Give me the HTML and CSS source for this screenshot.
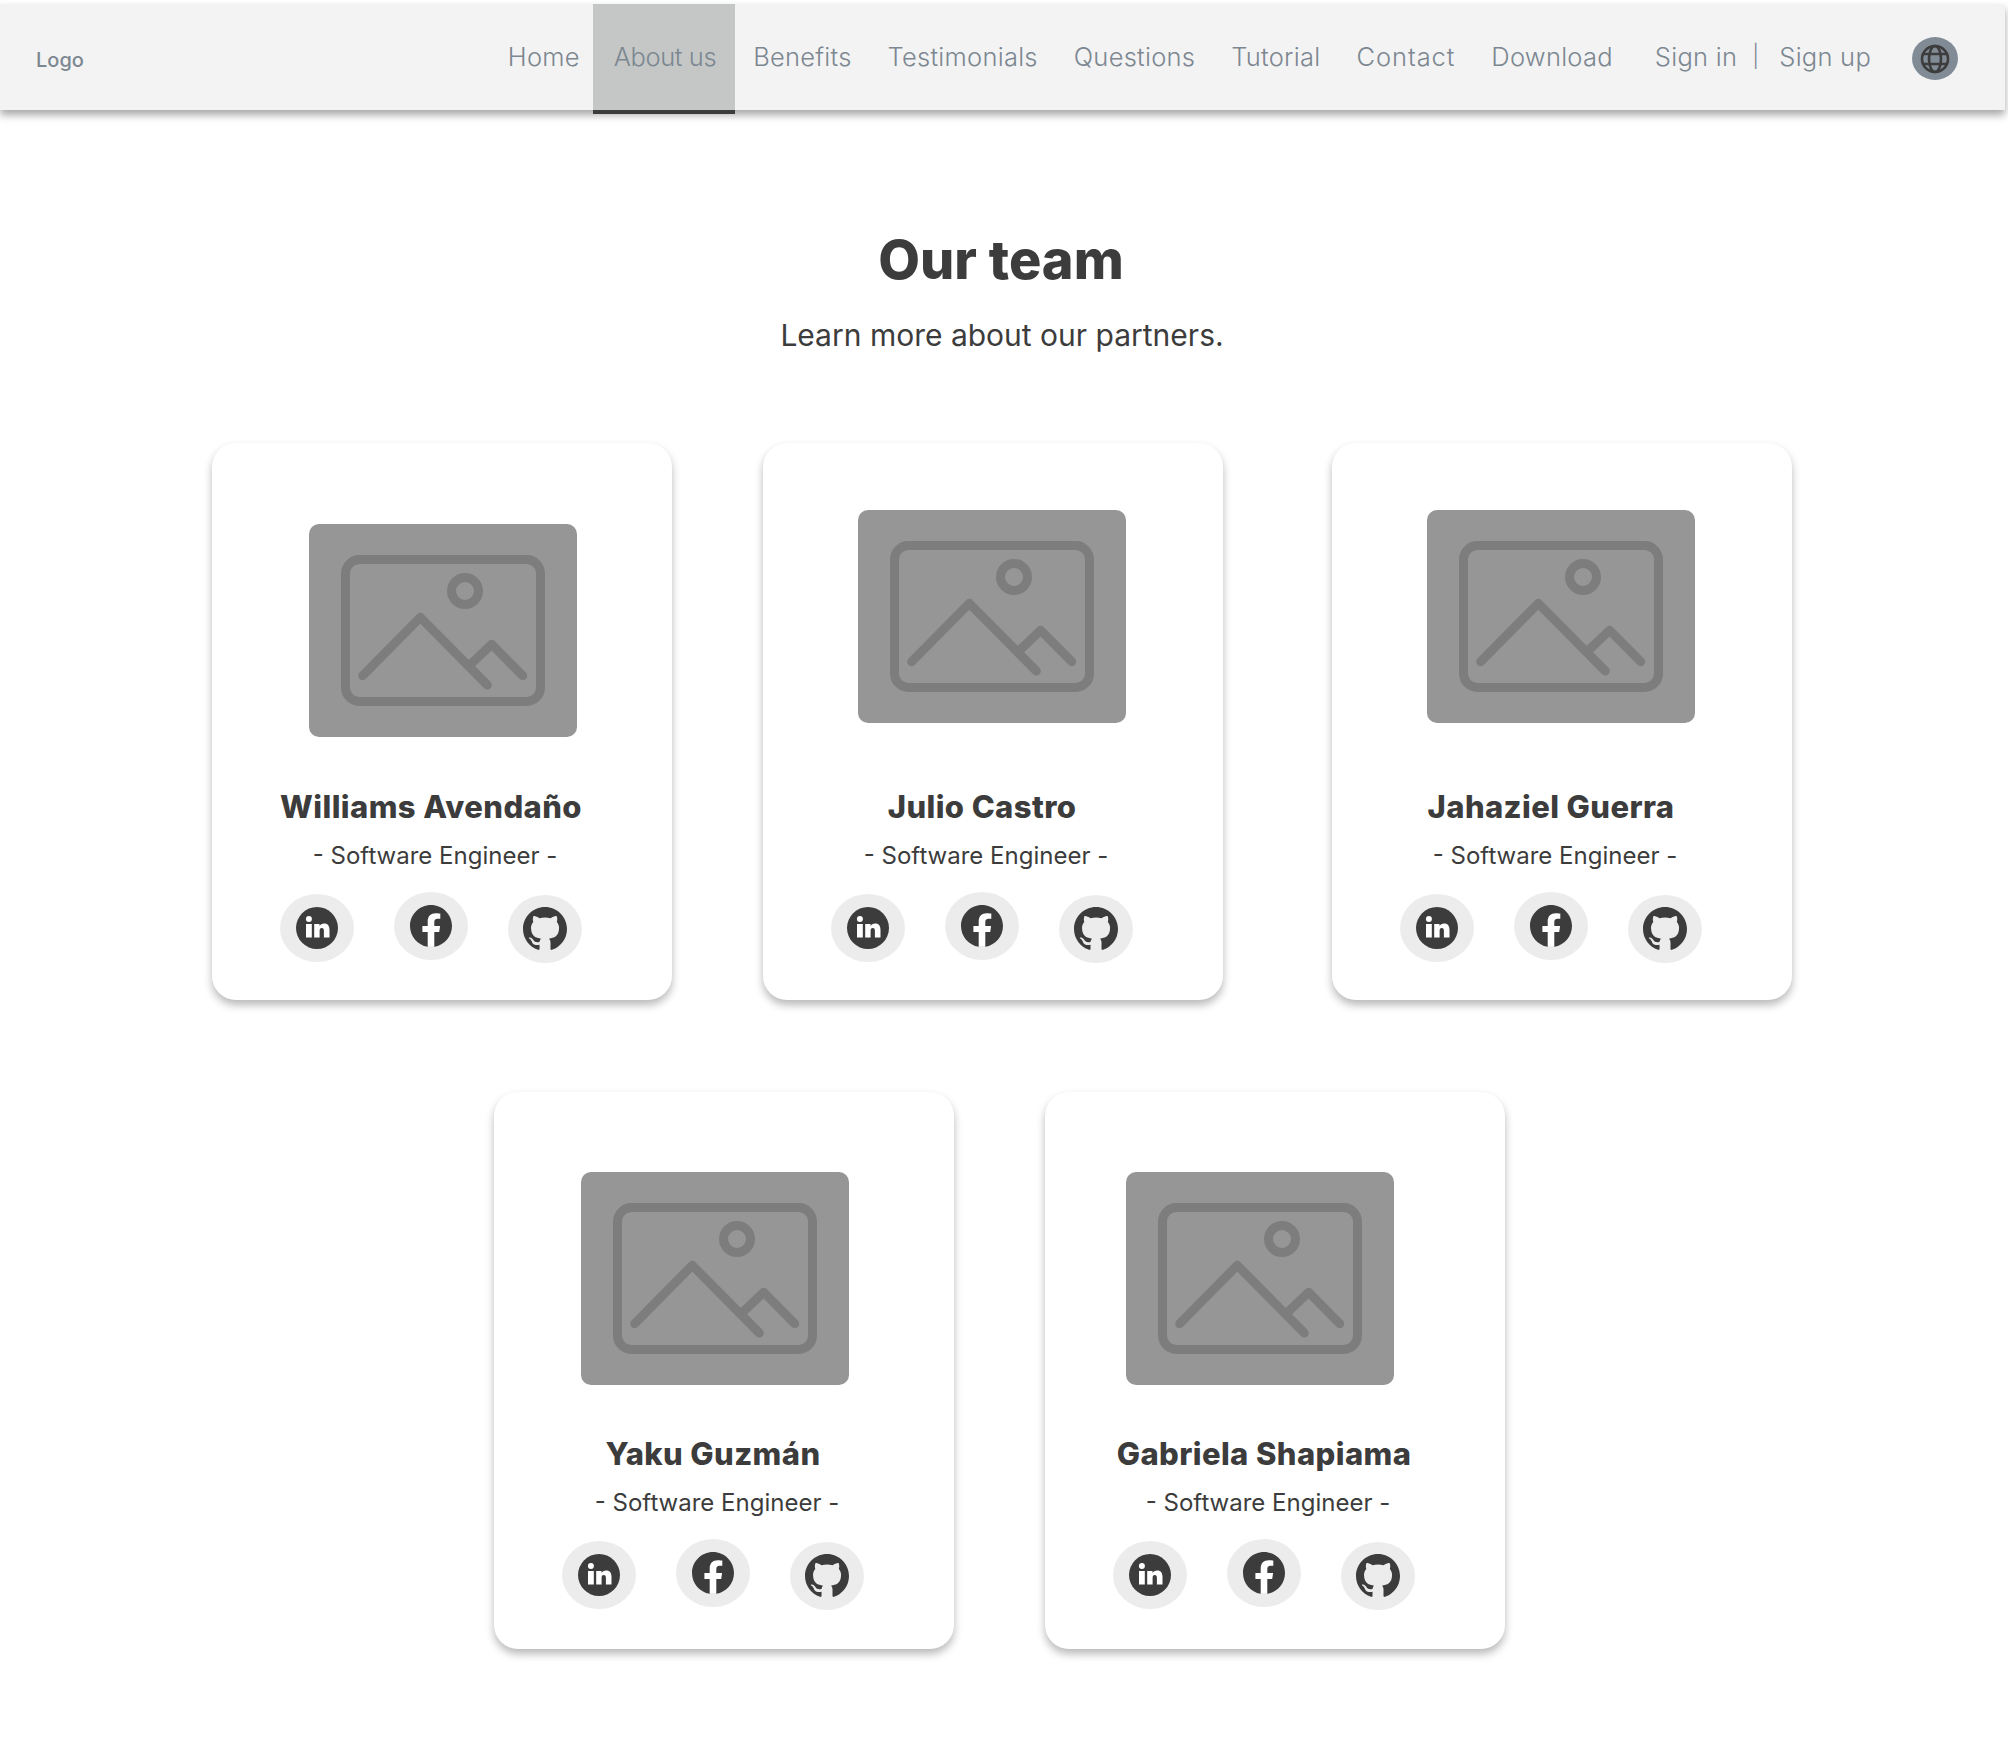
FILE: index.html
```html
<!DOCTYPE html>
<html lang="en">
<head>
    <meta charset="UTF-8" />
    <title>Our team</title>
    <link rel="stylesheet" href="styles.css">
</head>
<body>

<svg class="defs" width="0" height="0">
    <symbol id="placeholder" viewBox="0 0 268 213">
        <rect x="36.5" y="35.5" width="195" height="142" rx="14" fill="none" stroke="#7d7d7d" stroke-width="9"/>
        <circle cx="156" cy="67" r="13.5" fill="none" stroke="#7d7d7d" stroke-width="9"/>
        <path d="M53.7 151.7 111.3 93.3 178.3 161M162.7 139.3 182.7 120.3 213.7 151.7" fill="none" stroke="#7d7d7d" stroke-width="9" stroke-linecap="round" stroke-linejoin="round"/>
    </symbol>
    <symbol id="linkedin" viewBox="0 0 42 42">
        <circle cx="21" cy="21" r="21" fill="#3c3c3c"/>
        <path fill="#fff" d="M10 17h5.800v13.500H10zM12.900 9a3 3 0 1 1 0 6 3 3 0 0 1 0-6zM18.200 17h5.300v2c.8-1.400 2.500-2.400 4.600-2.400 4 0 5.400 2.600 5.400 6.300v7.600h-5.600v-6.600c0-1.700-.5-3-2.100-3-1.700 0-2.200 1.300-2.200 3v6.600h-5.400z"/>
    </symbol>
    <symbol id="facebook" viewBox="0 0 42 42">
        <circle cx="21" cy="21" r="20" fill="#fff"/>
        <path fill="#3c3c3c" d="M42 21C42 9.400 32.600 0 21 0S0 9.400 0 21c0 10.500 7.700 19.200 17.700 20.800V27.100h-5.300V21h5.300v-4.600c0-5.300 3.100-8.200 7.900-8.200 2.300 0 4.700.4 4.700.4v5.200h-2.600c-2.600 0-3.400 1.600-3.400 3.300V21h5.800l-.9 6.100h-4.900v14.700C34.300 40.200 42 31.500 42 21z"/>
    </symbol>
    <symbol id="github" viewBox="0 0 16 16">
        <path fill="#3c3c3c" d="M8 0C3.580 0 0 3.580 0 8c0 3.540 2.290 6.530 5.470 7.590.4.070.55-.17.55-.38 0-.19-.01-.82-.01-1.490-2.010.37-2.530-.49-2.690-.94-.09-.23-.48-.94-.82-1.130-.28-.15-.68-.52-.01-.53.63-.01 1.080.58 1.230.82.72 1.210 1.870.87 2.330.66.070-.52.28-.87.51-1.070-1.780-.2-3.640-.89-3.640-3.950 0-.87.31-1.590.82-2.150-.08-.2-.36-1.020.08-2.120 0 0 .67-.21 2.200.82.64-.18 1.320-.27 2-.27.68 0 1.360.09 2 .27 1.530-1.040 2.200-.82 2.200-.82.44 1.100.16 1.920.08 2.120.51.56.82 1.270.82 2.150 0 3.070-1.870 3.750-3.650 3.950.29.25.54.73.54 1.480 0 1.070-.01 1.930-.01 2.200 0 .21.15.46.55.38A8.013 8.013 0 0 0 16 8c0-4.420-3.580-8-8-8z"/>
    </symbol>
</svg>

<header class="navbar">
    <span class="logo">Logo</span>
    <nav class="nav-links">
        <a class="nav-link" href="#">Home</a>
        <a class="nav-link active" href="#">About us</a>
        <a class="nav-link" href="#">Benefits</a>
        <a class="nav-link" href="#">Testimonials</a>
        <a class="nav-link" href="#">Questions</a>
        <a class="nav-link" href="#">Tutorial</a>
        <a class="nav-link nav-wide" href="#">Contact</a>
        <a class="nav-link" href="#">Download</a>
    </nav>
    <div class="auth">
        <a href="#">Sign in</a>
        <span class="sep">|</span>
        <a href="#">Sign up</a>
    </div>
    <button class="globe" aria-label="Language">
        <svg viewBox="0 0 30 30" width="30" height="30" fill="none" stroke="#3c3c3c" stroke-width="2.600">
            <circle cx="15" cy="15" r="13"/>
            <ellipse cx="15" cy="15" rx="6" ry="13"/>
            <path d="M3.500 10h23M3.500 20h23"/>
        </svg>
    </button>
</header>

<main>
    <h1>Our team</h1>
    <p class="lead">Learn more about our partners.</p>

    <section class="team-row first-row">
        <article class="card card-low">
            <svg class="photo photo-right"><use href="#placeholder"/></svg>
            <h2>Williams Avendaño</h2>
            <p class="role">- Software Engineer -</p>
            <div class="socials">
                <a class="social"><svg class="ico"><use href="#linkedin"/></svg></a>
                <a class="social up"><svg class="ico"><use href="#facebook"/></svg></a>
                <a class="social down"><svg class="ico gh"><use href="#github"/></svg></a>
            </div>
        </article>
        <article class="card">
            <svg class="photo photo-nudge"><use href="#placeholder"/></svg>
            <h2>Julio Castro</h2>
            <p class="role">- Software Engineer -</p>
            <div class="socials">
                <a class="social"><svg class="ico"><use href="#linkedin"/></svg></a>
                <a class="social up"><svg class="ico"><use href="#facebook"/></svg></a>
                <a class="social down"><svg class="ico gh"><use href="#github"/></svg></a>
            </div>
        </article>
        <article class="card card-last">
            <svg class="photo photo-nudge"><use href="#placeholder"/></svg>
            <h2>Jahaziel Guerra</h2>
            <p class="role">- Software Engineer -</p>
            <div class="socials">
                <a class="social"><svg class="ico"><use href="#linkedin"/></svg></a>
                <a class="social up"><svg class="ico"><use href="#facebook"/></svg></a>
                <a class="social down"><svg class="ico gh"><use href="#github"/></svg></a>
            </div>
        </article>
    </section>

    <section class="team-row second-row">
        <article class="card card-low">
            <svg class="photo photo-left"><use href="#placeholder"/></svg>
            <h2>Yaku Guzmán</h2>
            <p class="role">- Software Engineer -</p>
            <div class="socials">
                <a class="social"><svg class="ico"><use href="#linkedin"/></svg></a>
                <a class="social up"><svg class="ico"><use href="#facebook"/></svg></a>
                <a class="social down"><svg class="ico gh"><use href="#github"/></svg></a>
            </div>
        </article>
        <article class="card card-low">
            <svg class="photo photo-lefter"><use href="#placeholder"/></svg>
            <h2>Gabriela Shapiama</h2>
            <p class="role">- Software Engineer -</p>
            <div class="socials">
                <a class="social"><svg class="ico"><use href="#linkedin"/></svg></a>
                <a class="social up"><svg class="ico"><use href="#facebook"/></svg></a>
                <a class="social down"><svg class="ico gh"><use href="#github"/></svg></a>
            </div>
        </article>
    </section>
</main>

</body>
</html>
```

FILE: styles.css
```css
* {
    box-sizing: border-box;
}
body {
    margin: 0;
    padding-top: 4px;
    min-height: 1744px;
    background-color: #fff;
    font-family: Inter, sans-serif;
    color: #3c3c3c;
}
.defs {
    position: absolute;
}
.navbar {
    display: flex;
    align-items: center;
    height: 106px;
    margin-right: 3px;
    padding-left: 36px;
    background-color: #f3f3f3;
    box-shadow: 0 5px 8px rgba(0,0,0,0.35);
    font-size: 25.5px;
    font-weight: 300;
    letter-spacing: 0.25px;
    color: #7c8791;
}
.navbar a {
    color: inherit;
    text-decoration: none;
}
.logo {
    font-size: 20px;
    font-weight: 500;
    letter-spacing: 0;
    margin-top: 6px;
    margin-right: auto;
}
.nav-links {
    display: flex;
    align-self: stretch;
}
.nav-link {
    display: flex;
    align-items: center;
    padding: 0 18px 2px;
    margin-bottom: -4px;
    border-bottom: 4px solid transparent;
}
.nav-wide {
    letter-spacing: 0.95px;
}
.nav-link.active {
    margin-left: -5px;
    padding: 0 19px 2px 21px;
    letter-spacing: -0.4px;
    background-color: #c5c7c6;
    border-bottom-color: #3c3c3c;
}
.auth {
    display: flex;
    align-items: center;
    gap: 20px;
    margin-left: 24px;
    padding-bottom: 2px;
}
.sep {
    margin-left: -5px;
    font-size: 22px;
}
.globe {
    display: flex;
    align-items: center;
    justify-content: center;
    width: 46px;
    height: 43px;
    margin: 3px 47px 0 41px;
    padding: 0;
    border: none;
    border-radius: 50%;
    background-color: #808b96;
}
h1 {
    margin: 116px 6px 0 0;
    text-align: center;
    font-size: 54px;
    line-height: 68px;
    font-weight: 800;
}
.lead {
    margin: 21px 4px 0 0;
    text-align: center;
    font-size: 30px;
    line-height: 40px;
}
.team-row {
    display: flex;
    gap: 91px;
}
.first-row {
    margin-top: 88px;
    padding-left: 212px;
}
.second-row {
    margin-top: 92px;
    padding-left: 494px;
}
.card {
    display: flex;
    flex-direction: column;
    align-items: center;
    width: 460px;
    height: 557px;
    padding-top: 67px;
    border-radius: 24px;
    background-color: #fff;
    box-shadow: 0 5px 8px rgba(0,0,0,0.28);
}
.card-low {
    padding-top: 81px;
}
.second-row .card-low {
    padding-top: 80px;
}
.card-last {
    margin-left: 18px;
}
.photo {
    flex: none;
    width: 268px;
    height: 213px;
    border-radius: 10px;
    background-color: #969696;
}
.photo-right {
    margin-left: 2px;
}
.photo-nudge {
    margin-right: 2px;
}
.photo-left {
    margin-right: 18px;
}
.photo-lefter {
    margin-right: 30px;
}
.card h2 {
    margin: 64px 22px 0 0;
    font-size: 31px;
    line-height: 40px;
    font-weight: 800;
    letter-spacing: 0.4px;
}
.card-low h2 {
    margin-top: 50px;
}
.second-row .card-low h2 {
    margin-top: 49px;
}
.role {
    margin: 13px 14px 0 0;
    font-size: 24px;
    line-height: 32px;
}
.socials {
    display: flex;
    gap: 40px;
    margin-top: 22px;
    margin-right: 22px;
}
.social {
    display: flex;
    align-items: center;
    justify-content: center;
    width: 74px;
    height: 68px;
    border-radius: 50%;
    background-color: #ececec;
}
.social.up {
    margin-top: -2px;
}
.social.down {
    margin-top: 1px;
}
.ico {
    width: 42px;
    height: 42px;
}
.ico.gh {
    width: 44px;
    height: 44px;
}
```
